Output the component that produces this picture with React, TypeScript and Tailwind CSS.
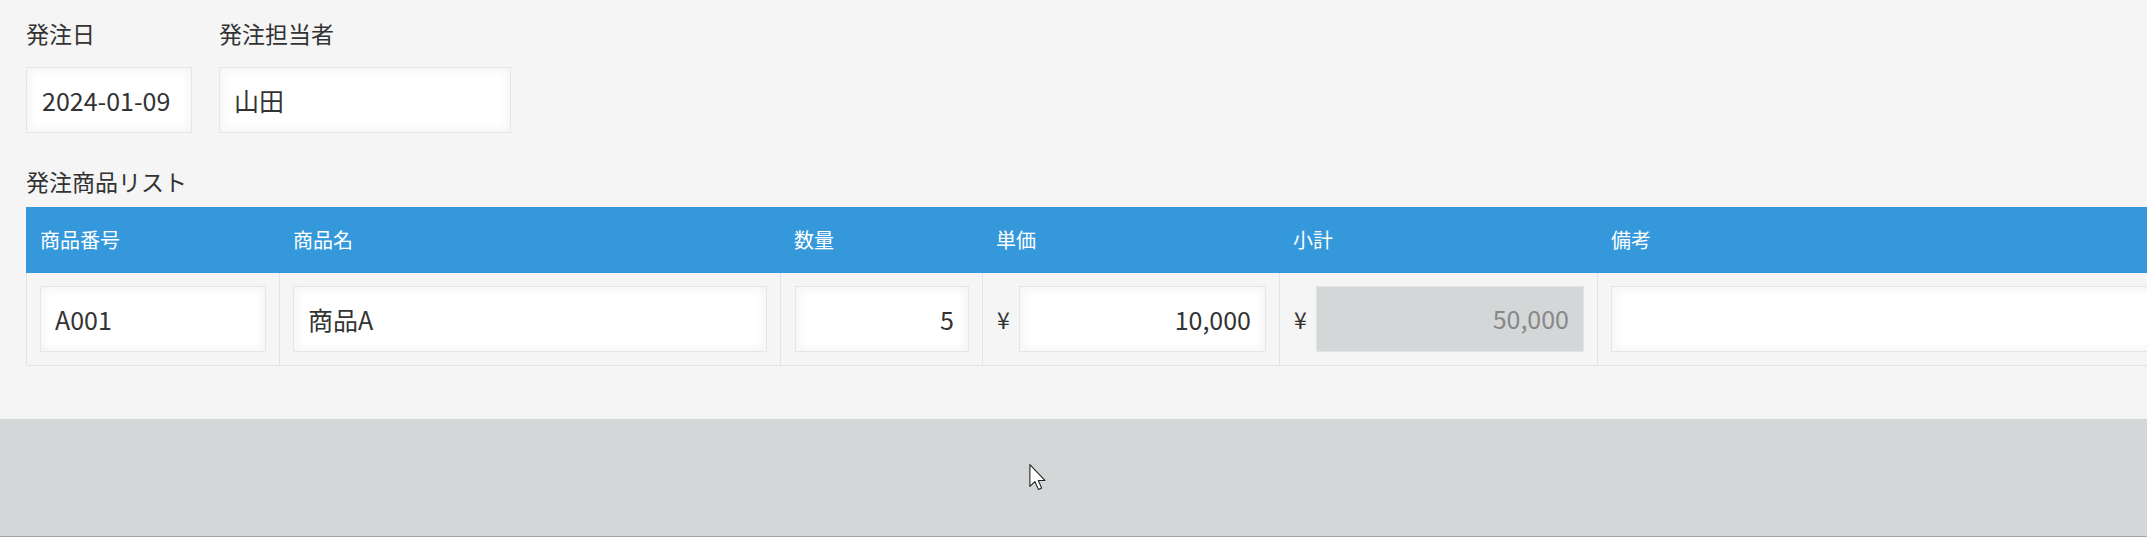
import React from "react";

const font = "font-['Noto_Sans_CJK_JP','Noto_Sans',sans-serif]";

const inputBase =
  "h-[66px] min-w-0 border border-[#e3e7e8] bg-white px-[14px] text-[25px] text-[#333] outline-none shadow-[inset_1px_1px_12px_#f5f5f5,inset_-1px_-1px_12px_#f5f5f5]";

interface Column {
  key: string;
  label: string;
  width: string;
}

const columns: Column[] = [
  { key: "code", label: "商品番号", width: "w-[253px]" },
  { key: "name", label: "商品名", width: "w-[501px]" },
  { key: "qty", label: "数量", width: "w-[202px]" },
  { key: "price", label: "単価", width: "w-[297px]" },
  { key: "subtotal", label: "小計", width: "w-[318px]" },
  { key: "note", label: "備考", width: "w-[620px]" },
];

const Cursor = () => (
  <svg
    className="absolute left-[1029px] top-[464px]"
    width="18"
    height="27"
    viewBox="0 0 13 20"
  >
    <path
      d="M0.5 0.5 L0.5 16.5 L4.2 13 L6.8 18.8 L9.2 17.8 L6.7 12.2 L11.6 12.2 Z"
      fill="#fff"
      stroke="#222"
      strokeWidth="0.8"
      strokeLinejoin="round"
    />
  </svg>
);

export default function App() {
  return (
    <div className={`relative w-full overflow-hidden bg-[#f5f5f5] ${font}`}>
      <div className="px-[26px] pt-[17px] pb-[53px]">
        {/* Header fields */}
        <div className="flex gap-[27px]">
          <div className="flex flex-col">
            <label className="text-[23px] leading-[32px] text-[#333]">
              発注日
            </label>
            <input
              type="text"
              readOnly
              defaultValue="2024-01-09"
              className={`${inputBase} mt-[18px] w-[166px] pl-[15px] pr-0`}
            />
          </div>
          <div className="flex flex-col">
            <label className="text-[23px] leading-[32px] text-[#333]">
              発注担当者
            </label>
            <input
              type="text"
              readOnly
              defaultValue="山田"
              className={`${inputBase} mt-[18px] w-[292px]`}
            />
          </div>
        </div>

        {/* Item list */}
        <div className="mt-[32px] text-[23px] leading-[32px] text-[#333]">
          発注商品リスト
        </div>
        <div className="mt-[10px] w-max">
          <div className="flex h-[66px] bg-[#3498db]">
            {columns.map((c) => (
              <div
                key={c.key}
                className={`${c.width} flex items-center pl-[14px] text-[20px] text-white`}
              >
                {c.label}
              </div>
            ))}
          </div>
          <div className="flex border-b border-[#e3e3e3]">
            <div className={`${columns[0].width} border-l border-[#e3e3e3] px-[13px] py-[13px]`}>
              <input type="text" readOnly defaultValue="A001" className={`${inputBase} w-full`} />
            </div>
            <div className={`${columns[1].width} border-l border-[#e3e3e3] px-[13px] py-[13px]`}>
              <input type="text" readOnly defaultValue="商品A" className={`${inputBase} w-full`} />
            </div>
            <div className={`${columns[2].width} border-l border-[#e3e3e3] pl-[14px] pr-[13px] py-[13px]`}>
              <input
                type="text"
                readOnly
                defaultValue="5"
                className={`${inputBase} w-full text-right`}
              />
            </div>
            <div
              className={`${columns[3].width} flex items-center gap-[9px] border-l border-[#e3e3e3] pl-[14px] pr-[13px] py-[13px]`}
            >
              <span className="text-[23px] text-[#333]">¥</span>
              <input
                type="text"
                readOnly
                defaultValue="10,000"
                className={`${inputBase} flex-1 text-right`}
              />
            </div>
            <div
              className={`${columns[4].width} flex items-center gap-[9px] border-l border-[#e3e3e3] pl-[14px] pr-[13px] py-[13px]`}
            >
              <span className="text-[23px] text-[#333]">¥</span>
              <div className="flex h-[66px] flex-1 items-center justify-end border border-[#e3e3e3] bg-[#d4d7d7] px-[14px] text-[25px] text-[#888]">
                50,000
              </div>
            </div>
            <div className={`${columns[5].width} border-l border-[#e3e3e3] px-[13px] py-[13px]`}>
              <input type="text" readOnly defaultValue="" className={`${inputBase} w-full`} />
            </div>
          </div>
        </div>
      </div>

      {/* Footer */}
      <div className="h-[118px] border-b border-[#a3a6a6] bg-[#d4d7d7]" />

      <Cursor />
    </div>
  );
}
